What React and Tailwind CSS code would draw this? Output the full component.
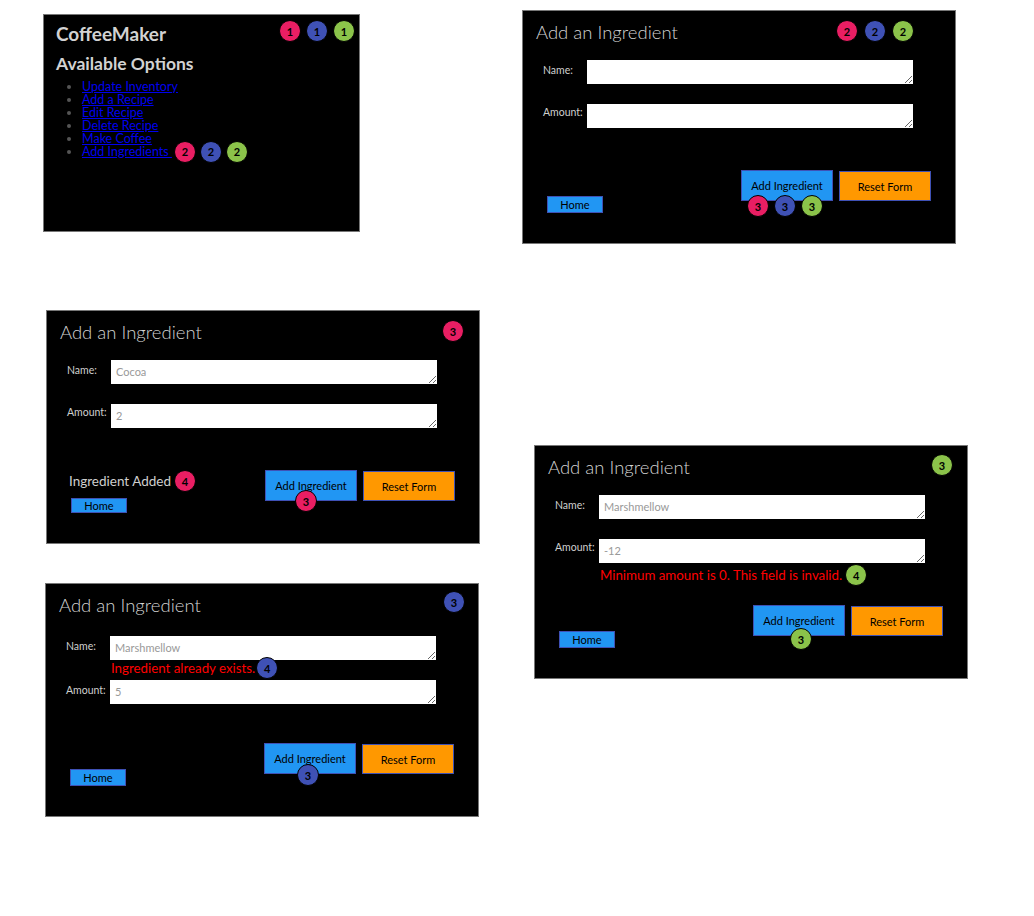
const PINK = 'bg-[#e91e63]';
const INDIGO = 'bg-[#3f51b5]';
const GREEN = 'bg-[#8bc34a]';

function Badge({ color, n, className = '' }) {
  return (
    <span
      className={`${color} ${className} flex h-[22px] w-[22px] shrink-0 items-center justify-center rounded-full border border-black text-[11px] font-bold leading-none text-black`}
    >
      {n}
    </span>
  );
}

function Field({ label, value, labelClass = '' }) {
  return (
    <div className="flex items-start">
      <span className={`w-[64px] shrink-0 pl-[20px] text-[10.5px] leading-[14px] text-[#cfcfcf] ${labelClass}`}>{label}</span>
      <textarea
        readOnly
        value={value}
        className="h-[24px] w-[326px] bg-white px-[5px] py-[5px] text-[11px] leading-[14px] text-[#999] outline-none"
      />
    </div>
  );
}

function ErrorText({ children, badge }) {
  return (
    <div className="flex items-center pl-[65px] text-[13.3px] leading-[16px] text-[#ff0000]">
      <span>{children}</span>
      {badge}
    </div>
  );
}

function IngredientForm({ className, topBadges, name = '', amount = '', nameError, amountError, status, addBadges }) {
  return (
    <div className={`absolute h-[234px] w-[434px] border border-[#777] bg-black ${className}`}>
      {topBadges}
      <h2 className="h-[40px] pl-[13px] pt-[9px] text-[18.5px] font-light leading-[24px] text-[#d2d2d2]">Add an Ingredient</h2>
      <div className="flex h-[119px] flex-col">
        {nameError ? (
          <>
            <div className="mt-[12px]">
              <Field label="Name:" value={name} labelClass="pt-[3px]" />
            </div>
            <div className="mt-0">{nameError}</div>
            <div className="mt-[4px]">
              <Field label="Amount:" value={amount} labelClass="pt-[3px]" />
            </div>
          </>
        ) : (
          <>
            <div className="mt-[9px]">
              <Field label="Name:" value={name} labelClass="pt-[3px]" />
            </div>
            <div className="mt-[20px]">
              <Field label="Amount:" value={amount} labelClass="pt-[1px]" />
            </div>
            {amountError && <div className="mt-[4px]">{amountError}</div>}
          </>
        )}
      </div>
      <div className="flex items-start">
        <div className="flex h-[43px] w-[218px] flex-col items-start justify-end pl-[24px]">
          {status}
          <button className="h-[17px] w-[56px] border border-[#3f51b5] bg-[#2196f3] text-[11px] leading-none text-black">Home</button>
        </div>
        <div className="relative">
          <button className="h-[31px] w-[92px] border border-[#3f51b5] bg-[#2196f3] text-[11px] leading-none text-black">Add Ingredient</button>
          {addBadges}
        </div>
        <button className="ml-[6px] mt-[1px] h-[30px] w-[92px] border border-[#3f51b5] bg-[#ff9800] text-[11px] leading-none text-black">Reset Form</button>
      </div>
    </div>
  );
}

function MainMenu() {
  const links = ['Update Inventory', 'Add a Recipe', 'Edit Recipe', 'Delete Recipe', 'Make Coffee'];
  return (
    <div className="absolute left-[43px] top-[14px] h-[218px] w-[317px] border border-[#777] bg-black">
      <div className="absolute left-[235px] top-[5px] flex gap-[5px]">
        <Badge color={PINK} n="1" />
        <Badge color={INDIGO} n="1" />
        <Badge color={GREEN} n="1" />
      </div>
      <h1 className="pl-[12px] pt-[7px] text-[19px] font-bold leading-[24px] text-[#d2d2d2]">CoffeeMaker</h1>
      <h2 className="mt-[7px] pl-[12px] text-[17.5px] font-bold leading-[22px] text-[#d2d2d2]">Available Options</h2>
      <ul className="mt-[5px] list-disc pl-[38px] text-[12.5px] leading-[13px] marker:text-[#555]">
        {links.map((l) => (
          <li key={l}>
            <a href="#" className="text-[#0000ee] underline">{l}</a>
          </li>
        ))}
        <li>
          <div className="flex items-center">
            <a href="#" className="whitespace-pre text-[#0000ee] underline">{'Add Ingredients '}</a>
            <div className="-my-[5px] ml-[2px] flex gap-[4px]">
              <Badge color={PINK} n="2" />
              <Badge color={INDIGO} n="2" />
              <Badge color={GREEN} n="2" />
            </div>
          </div>
        </li>
      </ul>
    </div>
  );
}

export default function App() {
  return (
    <div className="relative h-[916px] w-[1034px] overflow-hidden bg-white font-['Lato','Liberation_Sans',sans-serif]">
      <MainMenu />

      <IngredientForm
        className="left-[522px] top-[10px]"
        topBadges={
          <div className="absolute left-[313px] top-[9px] flex gap-[6px]">
            <Badge color={PINK} n="2" />
            <Badge color={INDIGO} n="2" />
            <Badge color={GREEN} n="2" />
          </div>
        }
        addBadges={
          <div className="absolute left-[6px] top-[25px] flex gap-[5px]">
            <Badge color={PINK} n="3" />
            <Badge color={INDIGO} n="3" />
            <Badge color={GREEN} n="3" />
          </div>
        }
      />

      <IngredientForm
        className="left-[46px] top-[310px]"
        name="Cocoa"
        amount="2"
        topBadges={<Badge color={PINK} n="3" className="absolute left-[395px] top-[9px]" />}
        status={
          <div className="mb-[6px] -ml-[2px] flex items-center text-[13.5px] leading-[20px] text-[#cfcfcf]">
            <span>Ingredient Added</span>
            <Badge color={PINK} n="4" className="ml-[3px]" />
          </div>
        }
        addBadges={<Badge color={PINK} n="3" className="absolute left-[30px] top-[20px]" />}
      />

      <IngredientForm
        className="left-[45px] top-[583px]"
        name="Marshmellow"
        amount="5"
        topBadges={<Badge color={INDIGO} n="3" className="absolute left-[397px] top-[7px]" />}
        nameError={
          <ErrorText badge={<Badge color={INDIGO} n="4" className="-my-[4px] ml-[1px]" />}>Ingredient already exists.</ErrorText>
        }
        addBadges={<Badge color={INDIGO} n="3" className="absolute left-[33px] top-[21px]" />}
      />

      <IngredientForm
        className="left-[534px] top-[445px]"
        name="Marshmellow"
        amount="-12"
        topBadges={<Badge color={GREEN} n="3" className="absolute left-[396px] top-[8px]" />}
        amountError={
          <ErrorText badge={<Badge color={GREEN} n="4" className="-my-[4px] ml-[3px]" />}>Minimum amount is 0. This field is invalid.</ErrorText>
        }
        addBadges={<Badge color={GREEN} n="3" className="absolute left-[37px] top-[23px]" />}
      />
    </div>
  );
}
